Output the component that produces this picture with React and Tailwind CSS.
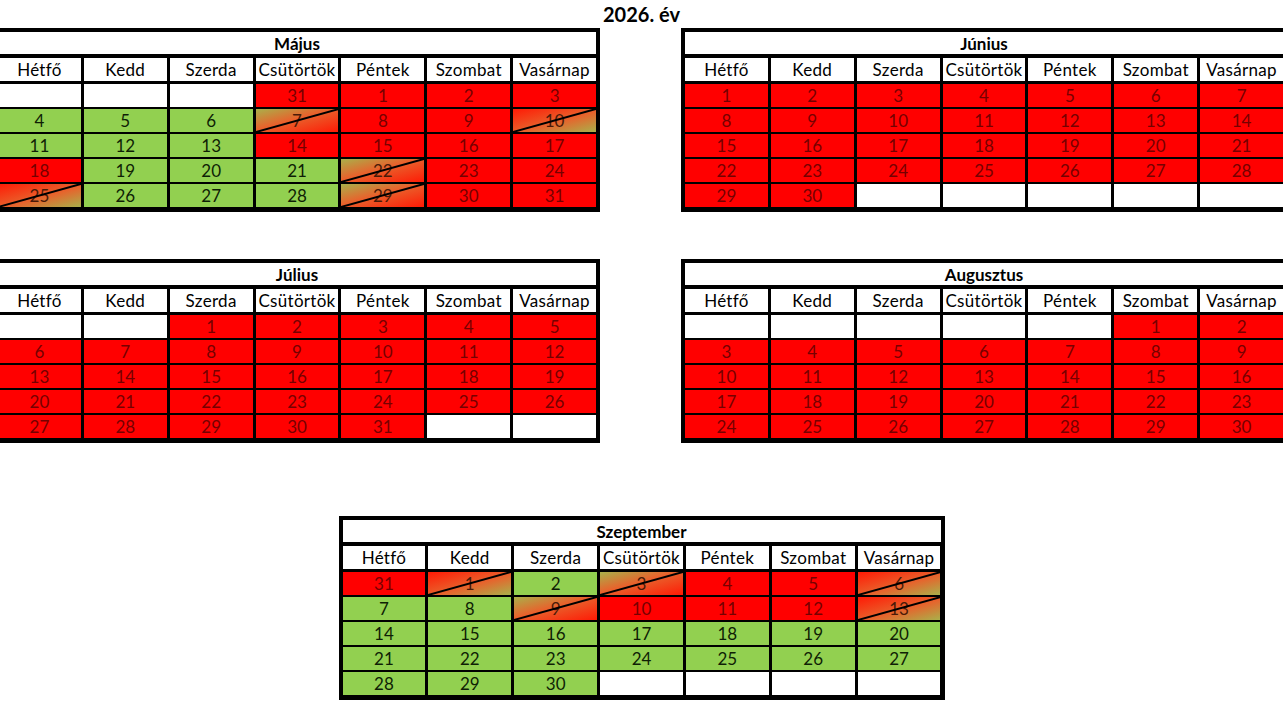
const days = ['Hétfő', 'Kedd', 'Szerda', 'Csütörtök', 'Péntek', 'Szombat', 'Vasárnap'];

// r = red, g = green, x = half day (green -> red), y = half day (red -> green), '' = empty
const months = {
  may: {
    name: 'Május',
    rows: [
      ['', '', '', 'r31', 'r1', 'r2', 'r3'],
      ['g4', 'g5', 'g6', 'x7', 'r8', 'r9', 'y10'],
      ['g11', 'g12', 'g13', 'r14', 'r15', 'r16', 'r17'],
      ['r18', 'g19', 'g20', 'g21', 'x22', 'r23', 'r24'],
      ['y25', 'g26', 'g27', 'g28', 'x29', 'r30', 'r31'],
    ],
  },
  june: {
    name: 'Június',
    rows: [
      ['r1', 'r2', 'r3', 'r4', 'r5', 'r6', 'r7'],
      ['r8', 'r9', 'r10', 'r11', 'r12', 'r13', 'r14'],
      ['r15', 'r16', 'r17', 'r18', 'r19', 'r20', 'r21'],
      ['r22', 'r23', 'r24', 'r25', 'r26', 'r27', 'r28'],
      ['r29', 'r30', '', '', '', '', ''],
    ],
  },
  july: {
    name: 'Július',
    rows: [
      ['', '', 'r1', 'r2', 'r3', 'r4', 'r5'],
      ['r6', 'r7', 'r8', 'r9', 'r10', 'r11', 'r12'],
      ['r13', 'r14', 'r15', 'r16', 'r17', 'r18', 'r19'],
      ['r20', 'r21', 'r22', 'r23', 'r24', 'r25', 'r26'],
      ['r27', 'r28', 'r29', 'r30', 'r31', '', ''],
    ],
  },
  august: {
    name: 'Augusztus',
    rows: [
      ['', '', '', '', '', 'r1', 'r2'],
      ['r3', 'r4', 'r5', 'r6', 'r7', 'r8', 'r9'],
      ['r10', 'r11', 'r12', 'r13', 'r14', 'r15', 'r16'],
      ['r17', 'r18', 'r19', 'r20', 'r21', 'r22', 'r23'],
      ['r24', 'r25', 'r26', 'r27', 'r28', 'r29', 'r30'],
    ],
  },
  september: {
    name: 'Szeptember',
    rows: [
      ['r31', 'y1', 'g2', 'x3', 'r4', 'r5', 'y6'],
      ['g7', 'g8', 'x9', 'r10', 'r11', 'r12', 'y13'],
      ['g14', 'g15', 'g16', 'g17', 'g18', 'g19', 'g20'],
      ['g21', 'g22', 'g23', 'g24', 'g25', 'g26', 'g27'],
      ['g28', 'g29', 'g30', '', '', '', ''],
    ],
  },
};

const cellStyles = {
  r: 'bg-[#ff0000] text-[#760000]',
  g: 'bg-[#92d050] text-[#0f1f05]',
  x: 'bg-[linear-gradient(to_bottom_right,#a9b04a,#e8622c_45%,#ff1a05)] text-[#4a1a08]',
  y: 'bg-[linear-gradient(to_bottom_right,#ff1a05,#e8622c_55%,#a9b04a)] text-[#4a1a08]',
};

function Cell({ c }) {
  if (!c) return <div className="h-[23px] bg-white" />;
  const type = c[0];
  const half = type === 'x' || type === 'y';
  return (
    <div className={`relative flex h-[23px] items-center justify-center text-[17px] leading-none ${cellStyles[type]}`}>
      {c.slice(1)}
      {half && (
        <svg className="absolute inset-0 h-full w-full" viewBox="0 0 100 100" preserveAspectRatio="none">
          <line x1="0" y1="100" x2="100" y2="0" stroke="#000" strokeWidth="2" vectorEffect="non-scaling-stroke" />
        </svg>
      )}
    </div>
  );
}

function Month({ name, rows }) {
  return (
    <div className="w-[606px] shrink-0 bg-black p-[4px] pb-[5px]">
      <div className="flex h-[22px] items-center justify-center bg-white pt-[1px] text-[17px] font-bold leading-none">{name}</div>
      <div className="mt-[4px] grid grid-cols-7 gap-x-[3px]">
        {days.map((d) => (
          <div key={d} className="flex h-[23px] items-center justify-center bg-white text-[17px] leading-none tracking-[0.3px]">
            {d}
          </div>
        ))}
      </div>
      <div className="mt-[3px] grid grid-cols-7 gap-x-[3px] gap-y-[2px]">
        {rows.flat().map((c, i) => (
          <Cell key={i} c={c} />
        ))}
      </div>
    </div>
  );
}

export default function App() {
  return (
    <div className="h-[712px] w-[1283px] overflow-hidden bg-white font-['Lato',sans-serif] text-black">
      <div className="flex h-[28px] items-center justify-center text-[20px] font-bold leading-none">2026. év</div>
      <div className="-ml-[6px] flex w-[1293px] gap-[81px]">
        <Month {...months.may} />
        <Month {...months.june} />
      </div>
      <div className="mt-[47px] -ml-[6px] flex w-[1293px] gap-[81px]">
        <Month {...months.july} />
        <Month {...months.august} />
      </div>
      <div className="mt-[73px] flex justify-center">
        <Month {...months.september} />
      </div>
    </div>
  );
}
